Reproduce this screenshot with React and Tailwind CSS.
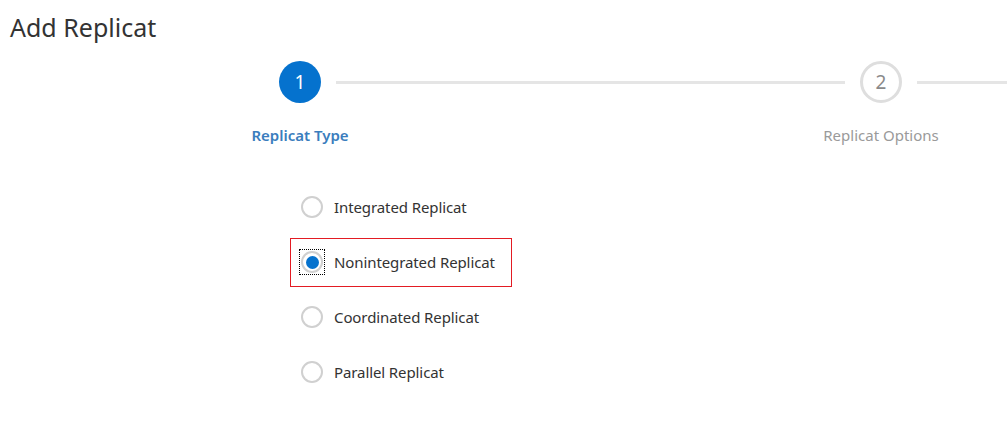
import { useState } from "react";

const opcije = [
  "Integrated Replicat",
  "Nonintegrated Replicat",
  "Coordinated Replicat",
  "Parallel Replicat",
];

function Pas({ nr, eticheta, activ }) {
  return (
    <div className="flex w-[72px] shrink-0 flex-col items-center">
      <div
        className={
          activ
            ? "flex h-[42px] w-[42px] items-center justify-center rounded-full bg-[#0572ce] text-[19px] text-white"
            : "flex h-[42px] w-[42px] items-center justify-center rounded-full border-[3px] border-[#dedede] bg-white text-[19px] text-[#8a8a8a]"
        }
      >
        {nr}
      </div>
      <div
        className={
          activ
            ? "mt-[21px] whitespace-nowrap text-[15px] font-semibold text-[#3a7dbd]"
            : "mt-[21px] whitespace-nowrap text-[15px] text-[#9a9a9a]"
        }
      >
        {eticheta}
      </div>
    </div>
  );
}

export default function App() {
  const [ales, setAles] = useState(1);

  return (
    <div
      className="h-[442px] w-[1007px] overflow-hidden bg-white text-[#333]"
      style={{ fontFamily: '"Noto Sans", "Open Sans", sans-serif' }}
    >
      <h1 className="pl-[10px] pt-[9px] text-[25px] leading-[36px] text-[#333]">
        Add Replicat
      </h1>

      <div className="mt-[16px] flex pl-[264px]">
        <Pas nr="1" eticheta="Replicat Type" activ />
        <div className="mt-[20px] h-[3px] flex-1 bg-[#e5e5e5]" />
        <Pas nr="2" eticheta="Replicat Options" />
        <div className="mt-[20px] h-[3px] w-[90px] bg-[#e5e5e5]" />
      </div>

      <div className="mt-[36px] flex flex-col gap-[6px] pl-[290px]">
        {opcije.map((o, i) => (
          <label
            key={o}
            onClick={() => setAles(i)}
            className={
              i === 1
                ? "flex h-[49px] w-[222px] cursor-pointer items-center gap-[9px] border border-[#e31b23] px-[8px]"
                : "flex h-[49px] w-[222px] cursor-pointer items-center gap-[9px] border border-transparent px-[8px]"
            }
          >
            <span
              className={
                i === 1
                  ? "flex h-[26px] w-[26px] items-center justify-center border border-dotted border-black"
                  : "flex h-[26px] w-[26px] items-center justify-center border border-transparent"
              }
            >
              <span className="flex h-[22px] w-[22px] items-center justify-center rounded-full border-2 border-[#d0d0d0] bg-white">
                {ales === i && (
                  <span className="h-[13px] w-[13px] rounded-full bg-[#0572ce]" />
                )}
              </span>
            </span>
            <span className="whitespace-nowrap text-[15px] tracking-[-0.1px]">{o}</span>
          </label>
        ))}
      </div>
    </div>
  );
}
